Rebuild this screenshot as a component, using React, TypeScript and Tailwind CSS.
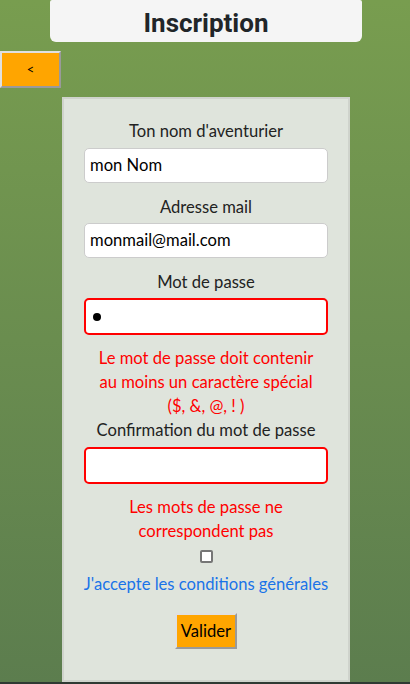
import React from "react";

const F = { fontFamily: "Lato, 'Noto Sans', sans-serif" };

function Label({ children }: { children: React.ReactNode }) {
  return <div className="text-[16.6px] leading-[24px] text-[#222222] text-center">{children}</div>;
}

export default function App() {
  return (
    <div
      className="relative w-[410px] h-[684px] overflow-hidden bg-gradient-to-b from-[#789d4f] to-[#5c7d4e]"
      style={F}
    >
      <div className="ml-[50px] w-[312px] h-[42px] bg-[#f5f5f5] rounded-b-[6px] rounded-t-[2px] flex items-center justify-center pt-[3px]">
        <span
          className="text-[26px] font-bold text-[#212529] leading-none"
          style={{ fontFamily: "Roboto, 'Liberation Sans', sans-serif" }}
        >
          Inscription
        </span>
      </div>
      <div className="mt-[9px] w-[61px] h-[37px] bg-[#ffa500] border-2 border-t-[#e0e0e0] border-l-[#e0e0e0] border-b-[#9a9a9a] border-r-[#9a9a9a] flex items-center justify-center text-[13px] text-black">
        &lt;
      </div>
      <div className="mt-[9px] ml-[62px] w-[288px] h-[585px] bg-[#dfe4dc] border-2 border-[#cfd3cc] flex flex-col items-center pt-[20px]">
        <Label>Ton nom d'aventurier</Label>
        <div className="mt-[5px] w-[244px] h-[35px] bg-white border border-[#cccccc] rounded-[5px] flex items-center px-[5px] text-[16.6px] text-black">
          mon Nom
        </div>
        <div className="mt-[12px]">
          <Label>Adresse mail</Label>
        </div>
        <div className="mt-[4px] w-[244px] h-[35px] bg-white border border-[#cccccc] rounded-[5px] flex items-center px-[5px] text-[16.6px] text-black">
          monmail@mail.com
        </div>
        <div className="mt-[12px]">
          <Label>Mot de passe</Label>
        </div>
        <div className="mt-[4px] w-[244px] h-[37px] bg-white border-2 border-[#ff0000] rounded-[5px] flex items-center px-[5px]">
          <span className="w-[8px] h-[8px] rounded-full bg-black ml-[2px]" />
        </div>
        <div className="mt-[11px] text-[16.6px] leading-[24px] text-[#ff0000] text-center">
          Le mot de passe doit contenir
          <br />
          au moins un caractère spécial
          <br />
          ($, &amp;, @, ! )
        </div>
        <Label>Confirmation du mot de passe</Label>
        <div className="mt-[5px] w-[244px] h-[37px] bg-white border-2 border-[#ff0000] rounded-[5px]" />
        <div className="mt-[11px] text-[16.6px] leading-[24px] text-[#ff0000] text-center">
          Les mots de passe ne
          <br />
          correspondent pas
        </div>
        <span className="mt-[7px] w-[13px] h-[13px] bg-white border-2 border-[#767676] rounded-[2px]" />
        <div className="mt-[9px] text-[16.6px] leading-[24px] text-[#1a73e8] text-center whitespace-nowrap">
          J'accepte les conditions générales
        </div>
        <div className="mt-[17px] w-[62px] h-[36px] bg-[#ffa500] border-2 border-t-[#e0e0e0] border-l-[#e0e0e0] border-b-[#9a9a9a] border-r-[#9a9a9a] flex items-center justify-center text-[16.6px] text-black">
          Valider
        </div>
      </div>
      <div className="h-[2px] bg-[#2f3a33]" />
    </div>
  );
}
